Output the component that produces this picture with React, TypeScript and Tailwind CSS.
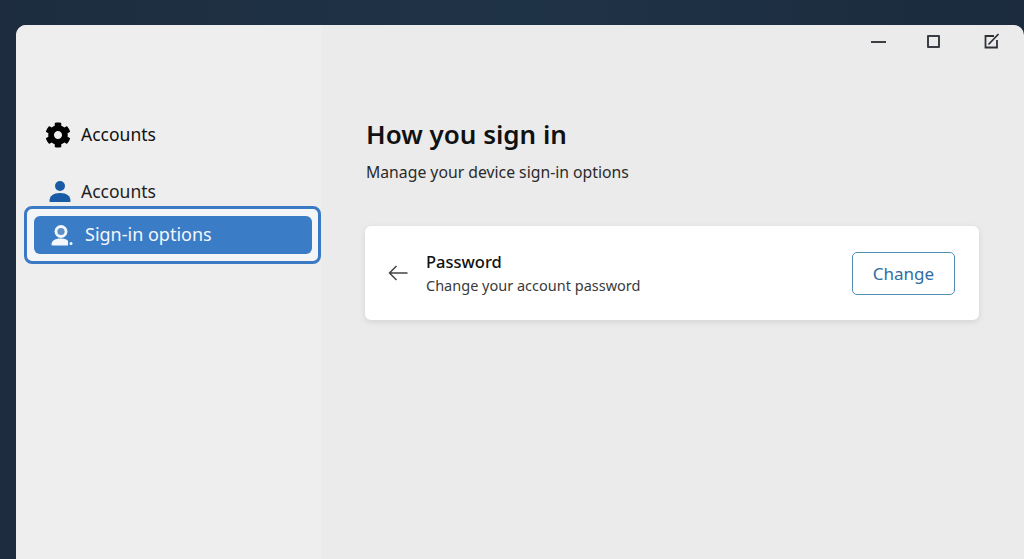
import { FaCog } from 'react-icons/fa'

function PersonIcon() {
  return (
    <svg width="22" height="22" viewBox="0 0 22 22" className="shrink-0 text-[#1a5ba6]" fill="currentColor">
      <circle cx="11" cy="6" r="5" />
      <path d="M0.500 21c0-5 3.500-8 10.500-8s10.500 3 10.500 8c0 .6-.4 1-1 1h-19c-.6 0-1-.4-1-1z" />
    </svg>
  )
}

function SignInIcon() {
  return (
    <svg width="22" height="22" viewBox="0 0 22 22" className="shrink-0" fill="none">
      <circle cx="10" cy="7.500" r="6.500" fill="#f4f7fb" />
      <circle cx="10" cy="7.500" r="3.600" fill="#5f8fc7" />
      <path d="M0.500 21c0-4 2.500-6.500 9.500-6.500 4 0 6 1 7 2.500v4.500H1.500c-.6 0-1-.2-1-.5z" fill="#f4f7fb" />
      <circle cx="20" cy="19.500" r="1.500" fill="#f4f7fb" />
    </svg>
  )
}

export default function App() {
  return (
    <div className="h-[559px] w-[1024px] overflow-hidden bg-gradient-to-r from-[#1d2d3f] via-[#1f3347] to-[#1b2b3d] pl-[16px] pt-[25px] font-['Noto_Sans',sans-serif]">
      <div className="flex h-[534px] overflow-hidden rounded-tl-[10px] rounded-tr-[10px] bg-[#ebebeb]">
        {/* Sidebar */}
        <aside className="flex w-[305px] shrink-0 flex-col bg-[#eeeeee] pl-[8px] pt-[97px]">
          <div className="flex h-[26px] items-center gap-[10px] pl-[21px]">
            <FaCog size={26} className="shrink-0 text-black" />
            <span className="mt-[-2px] text-[17.500px] text-[#111111]">Accounts</span>
          </div>
          <div className="mt-[30px] flex h-[26px] items-center gap-[10px] pl-[25px]">
            <PersonIcon />
            <span className="text-[17.500px] text-[#222222]">Accounts</span>
          </div>
          <div className="mt-[2px] h-[58px] w-[297px] rounded-[8px] border-[3px] border-[#3a7ac4] bg-[#f3f5f7] p-[7px]">
            <div className="flex h-[38px] w-[278px] items-center gap-[12px] rounded-[6px] bg-[#3b7cc7] pl-[17px] text-[18px] text-[#f4f7fb]">
              <SignInIcon />
              <span className="mt-[-2px]">Sign-in options</span>
            </div>
          </div>
        </aside>

        {/* Main */}
        <main className="flex min-w-0 flex-1 flex-col">
          <div className="flex h-[24px] items-end justify-end pr-[24px]">
            <div className="flex items-center">
              <div className="mb-[-1px] h-[2px] w-[15px] bg-[#3a3f45]" />
              <div className="ml-[41px] h-[13px] w-[13px] rounded-[1px] border-2 border-[#3a3f45]" />
              <svg width="16" height="16" viewBox="0 0 16 16" fill="none" stroke="#2f3338" className="ml-[44px]">
                <path d="M13 7v7.500H1.500V3H10" strokeWidth="1.800" />
                <path d="M4.500 11.500 14.500 1" strokeWidth="1.800" />
              </svg>
            </div>
          </div>

          <div className="pl-[44px] pr-[45px] pt-[67px]">
            <h1 className="pl-[1px] text-[26px] font-semibold leading-[36px] text-[#111111]">How you sign in</h1>
            <p className="mt-[8px] pl-[1px] text-[15.750px] leading-[24px] text-[#2a2a2a]">Manage your device sign-in options</p>

            <div className="mt-[42px] flex h-[94px] w-[614px] items-center rounded-[6px] bg-white pl-[23px] pr-[24px] shadow-[0_2px_6px_rgba(0,0,0,0.1)]">
              <svg width="20" height="16" viewBox="0 0 20 16" fill="none" stroke="#444444" strokeWidth="1.500" className="shrink-0">
                <path d="M19.500 8H1.500M8.500 1 1.500 8l7 7" />
              </svg>
              <div className="ml-[18px] flex-1">
                <div className="mt-[-1px] text-[16.500px] font-medium leading-[24px] text-[#111111]">Password</div>
                <div className="text-[14.500px] leading-[22px] text-[#3a3a3a]">Change your account password</div>
              </div>
              <button className="h-[43px] w-[103px] rounded-[5px] border border-[#4f8fb5] bg-white pt-[1px] text-[17px] text-[#2f6da3]">
                Change
              </button>
            </div>
          </div>
        </main>
      </div>
    </div>
  )
}
